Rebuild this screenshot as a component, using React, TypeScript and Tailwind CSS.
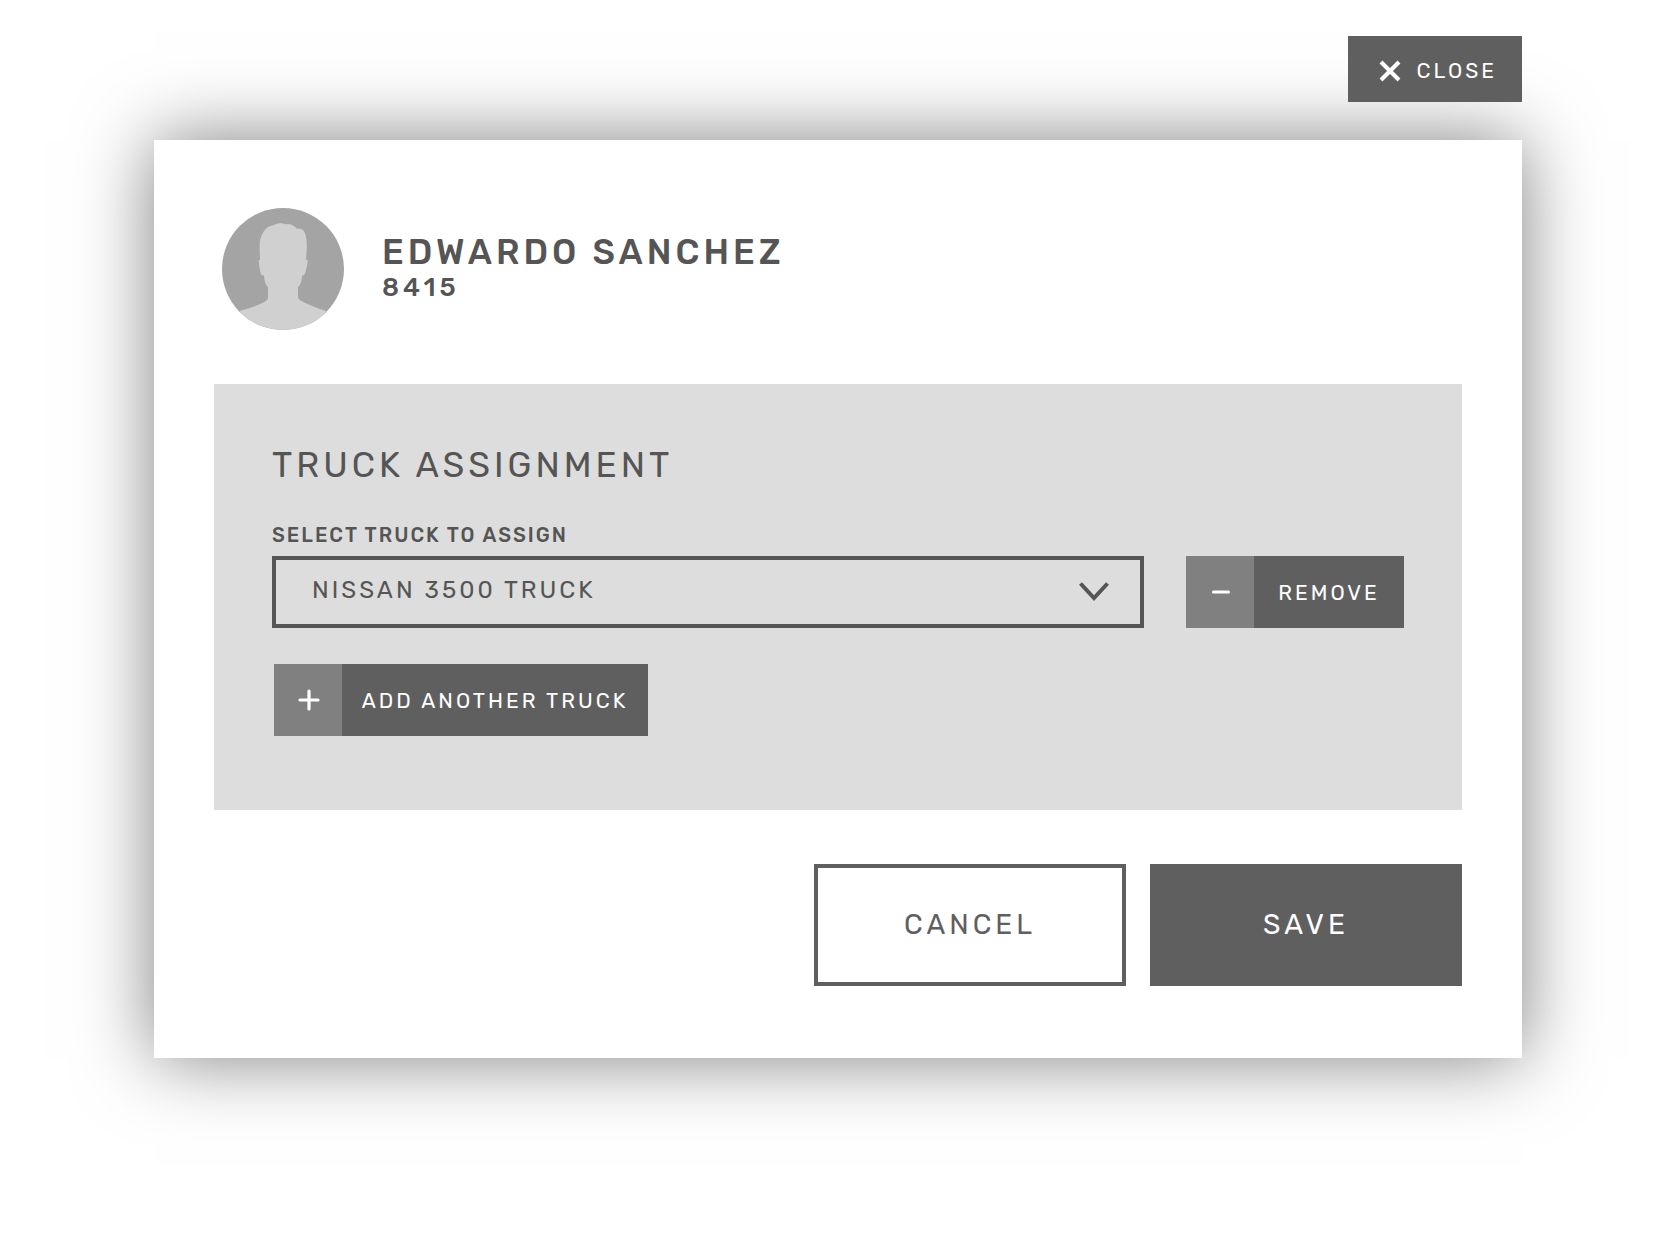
import React from "react";

function Avatar() {
  return (
    <svg
      viewBox="0 0 122 122"
      className="size-[122px] shrink-0 rounded-full bg-[#a4a4a4]"
      role="img"
      aria-label="Profile picture"
    >
      <path
        d="M17.300 103.300C22 101.500 27 100.500 31.300 98.800C35 97.300 38.500 96 41.300 94.600C44 93.200 46 91.500 46 89.500V79.300C44.500 77.500 43.500 75.500 43 73.700C42.300 71.500 42.200 69.500 42 67.300C40.500 67.600 39.700 67.500 39.300 66.700C38.700 65.500 38.200 63.500 38 62C37.300 59 36.800 56 36.700 53C36.800 52 37.500 51.800 38.200 52C37.600 46.500 37.500 41 37.700 35.300C37.900 32 38.800 29 40.300 26C41.600 23.400 43.500 21 45.700 19.300C47.500 18.200 49.300 18 51.300 17.300C52.700 16.300 54 15.900 55.700 15.700C57.500 15 59.500 15.100 61.300 15.600L63 16.300L66.300 16L69.700 16.700C70.200 17.700 71.500 17.900 73 18.700L74.300 20.500C76 20.300 77.500 20.400 79 21C80.500 21.700 81.500 22.800 82.300 24C83.500 26 84 28 84.300 30.300C84.800 34 84.900 38 84.700 42C84.500 45.500 84.200 49 83.800 52C84.900 51.600 85.700 51.800 85.700 53C85.500 56 84.900 59 84 62C83.600 63.800 83 65.500 82.300 66.700C81.800 67.400 81 67.500 80.200 67.300C80 69.800 79.700 72 79 74.300C78.300 76.300 77.200 78 76 79.300V89.300C76 91 78.500 92.500 81.300 93.900C84.500 95.500 87.700 97 91.300 98.500C95.500 100.300 100 101.500 104.700 103.300V122H17.300Z"
        fill="#d0d0d0"
      />
    </svg>
  );
}

interface IconButtonProps {
  icon: string;
  width: string;
  children: React.ReactNode;
}

function IconButton({ icon, width, children }: IconButtonProps) {
  return (
    <button type="button" className={`flex h-[72px] shrink-0 items-stretch bg-[#5f5f5f] text-white ${width}`}>
      <span className="flex w-[68px] items-center justify-center bg-[#808080] pl-0.5">
        <svg
          viewBox="0 0 24 24"
          className="size-6"
          stroke="currentColor"
          strokeWidth="3.2"
          strokeLinecap="round"
          aria-hidden="true"
        >
          <path d={icon} />
        </svg>
      </span>
      <span className="flex flex-1 items-center justify-center pt-0.5 text-[21px] tracking-[3px] whitespace-nowrap">
        {children}
      </span>
    </button>
  );
}

export default function App() {
  return (
    <div className="min-h-screen bg-white pt-9 pr-[150px] pb-44 pl-[154px] font-['Rubik','Roboto',sans-serif] text-[#555]">
      <div className="flex justify-end">
        <button
          type="button"
          className="relative flex h-[66px] items-center gap-[15px] bg-[#5f5f5f] pt-1 pr-[25px] pl-[31px] text-[21px] tracking-[3px] text-white"
        >
          <svg viewBox="0 0 22 22" className="size-[22px]" stroke="currentColor" strokeWidth="4" aria-hidden="true">
            <path d="M2 2l18 18M20 2L2 20" />
          </svg>
          CLOSE
        </button>
      </div>

      <main
        role="dialog"
        aria-labelledby="driver-name"
        className="mt-[38px] bg-white px-[60px] pt-[68px] pb-[72px] shadow-[0_0_72px_rgba(0,0,0,0.5)]"
      >
        <header className="flex items-center gap-[38px] pl-2">
          <Avatar />
          <div className="font-medium">
            <h1 id="driver-name" className="text-[35px] leading-9 tracking-[4px]">
              EDWARDO SANCHEZ
            </h1>
            <p className="mt-0.5 text-[26px] leading-8 tracking-[4px]">8415</p>
          </div>
        </header>

        <section className="mt-[54px] bg-[#ddd] px-[58px] pt-[61px] pb-[74px]">
          <h2 className="text-[35px] leading-10 tracking-[4px]">TRUCK ASSIGNMENT</h2>
          <label htmlFor="truck" className="mt-9 block text-[20px] leading-7 font-medium tracking-[2px]">
            SELECT TRUCK TO ASSIGN
          </label>
          <div className="mt-[7px] flex gap-[42px]">
            <div className="relative flex-1">
              <select
                id="truck"
                className="h-[72px] w-full appearance-none rounded-none border-4 border-[#555] bg-transparent pr-20 pb-1 pl-9 text-[24px] tracking-[3px]"
              >
                <option>NISSAN 3500 TRUCK</option>
              </select>
              <svg
                viewBox="0 0 30 20"
                className="pointer-events-none absolute top-[26px] right-[35px] h-5 w-[30px]"
                fill="none"
                stroke="currentColor"
                strokeWidth="4"
                aria-hidden="true"
              >
                <path d="M1.500 1.500L15 16L28.500 1.500" />
              </svg>
            </div>
            <IconButton icon="M4.500 12h15" width="w-[218px]">
              REMOVE
            </IconButton>
          </div>
          <div className="mt-9 flex pl-0.5">
            <IconButton icon="M3 12h18M12 3v18" width="w-[374px]">
              ADD ANOTHER TRUCK
            </IconButton>
          </div>
        </section>

        <footer className="mt-[54px] flex justify-end gap-6 text-[28px]">
          <button
            type="button"
            className="h-[122px] w-[312px] border-4 border-[#5f5f5f] tracking-[4px] text-[#5f5f5f]"
          >
            CANCEL
          </button>
          <button type="button" className="h-[122px] w-[312px] bg-[#5f5f5f] tracking-[4px] text-white">
            SAVE
          </button>
        </footer>
      </main>
    </div>
  );
}
